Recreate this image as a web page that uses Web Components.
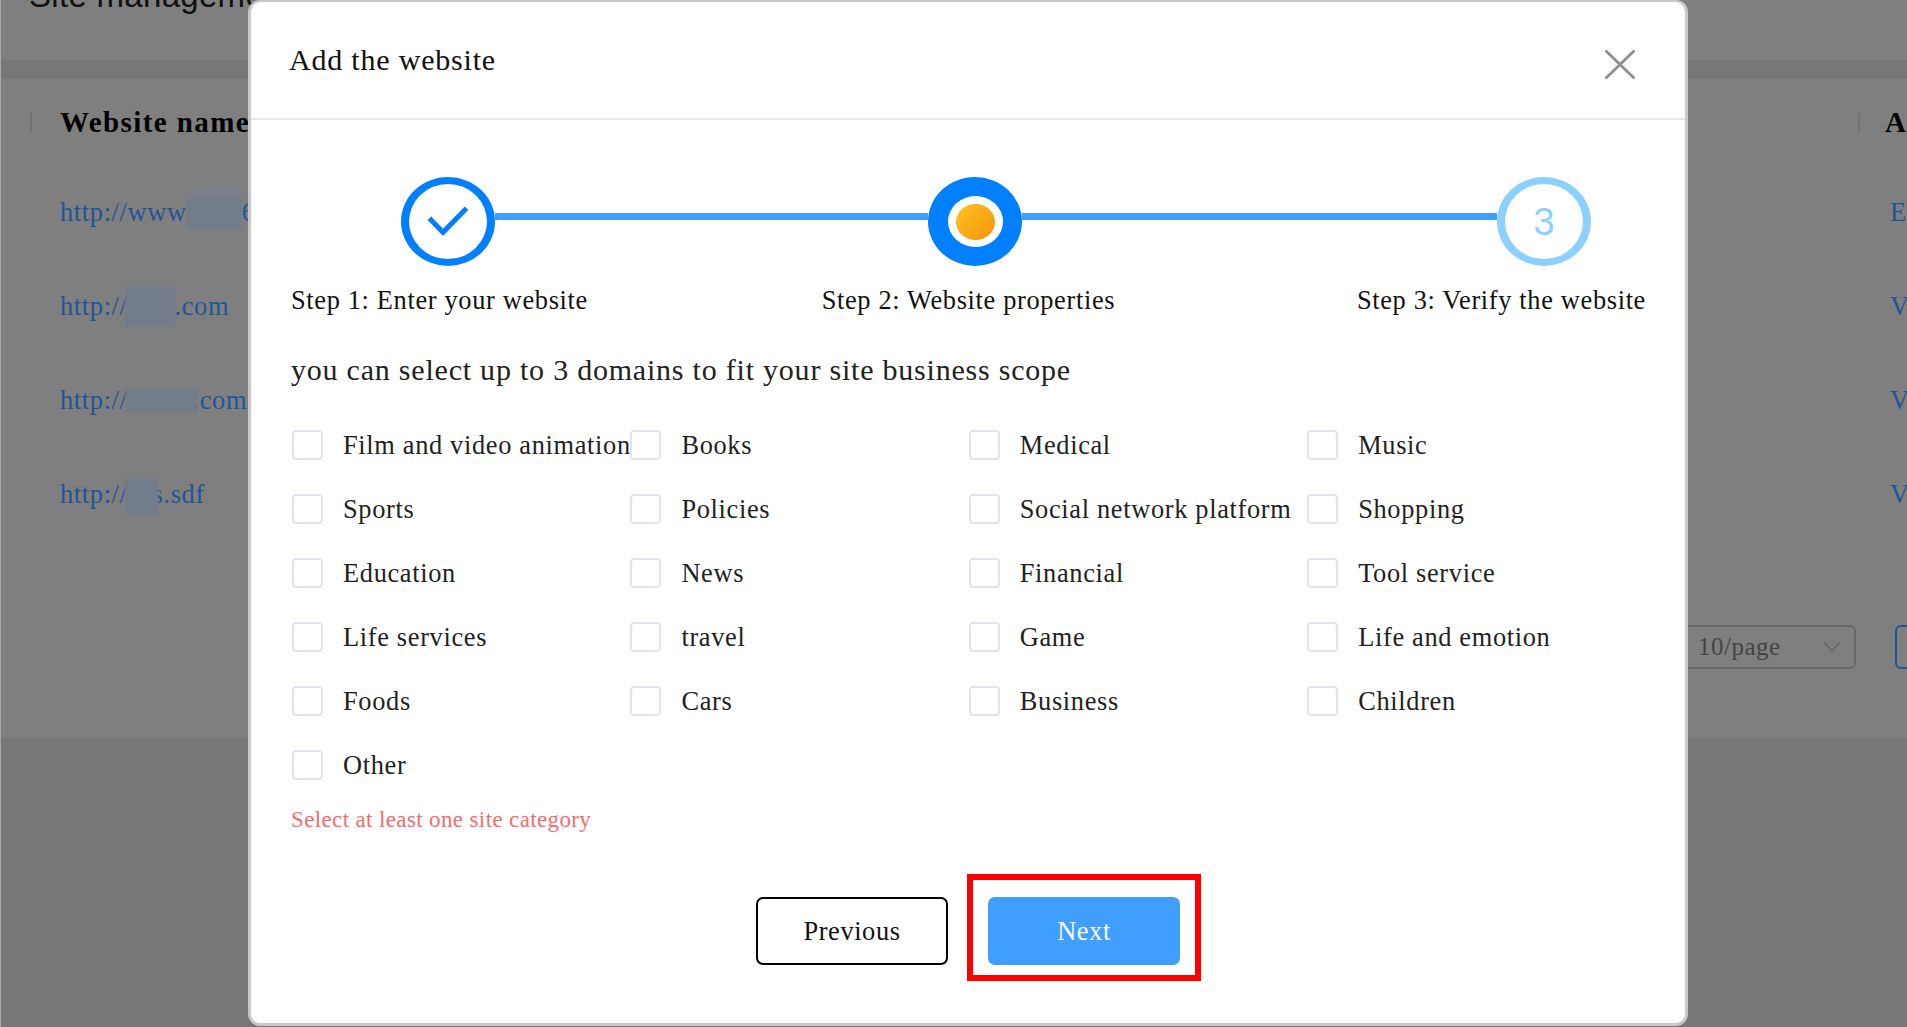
<!DOCTYPE html>
<html lang="en">
<head>
<meta charset="utf-8">
<title>Add the website</title>
<style>
  html, body { margin: 0; height: 100%; overflow: hidden; }
  body { font-family: "Liberation Serif", serif; color: #000; }
</style>
</head>
<body>
<site-page></site-page>
<add-website-dialog></add-website-dialog>

<script>
//Fondo de la página: lo que queda detrás del velo
class SitePage extends HTMLElement {
    constructor() {
        super();
        this.dom = this.attachShadow({mode:'open'});
    }
    connectedCallback() {
        //texto, ancho del tapón, alto, bajada, margen, resto del texto, acción
        const rows = [
            ['http://www', 55, 42, -8, 0, '6', 'E'],
            ['http://', 50, 40, -12, 0, '.com', 'V'],
            ['http://', 72, 24, -4, -4, '.com', 'V'],
            ['http://', 33, 36, -12, -5, 's.sdf', 'V']
        ];
        const htmlRows = rows.map((r, i) => `
            <div class="row">
                <div class="name"><span class="lnk">${r[0]}<i class="hide" style="width:${r[1]}px;height:${r[2]}px;vertical-align:${r[3]}px;margin:0 ${r[4]}px 0 ${i ? -3 : 0}px"></i>${r[5]}</span></div>
                <div class="act lnk">${r[6]}</div>
            </div>`).join('');
        this.dom.innerHTML = `
        <style>
            :host { display:block; position:relative; width:1907px; height:1027px; background:#eceef1; overflow:hidden; font-family:"Liberation Serif",serif; }
            .top { height:60px; background:#fff; overflow:hidden; }
            .top h1 { margin:-20px 0 0 29px; font:400 33px/32px "Liberation Sans",sans-serif; letter-spacing:.3px; color:#222; white-space:nowrap; }
            .band { height:19px; }
            .card { background:#fff; height:659px; }
            .row { display:flex; height:94px; line-height:94px; font-size:26.5px; letter-spacing:.6px; }
            .row.head { height:86px; line-height:86px; font-weight:700; font-size:29px; letter-spacing:1.4px; }
            .name { width:1797px; padding-left:60px; flex:none; white-space:nowrap; position:relative; }
            .head .name::before, .head .act::before { content:""; position:absolute; top:34px; height:20px; width:2px; background:#e6e6e6; }
            .head .name::before { left:30px; }
            .act { position:relative; padding-left:28px; white-space:nowrap; }
            .head .act::before { left:1px; }
            .row:not(.head) .act { padding-left:33px; }
            /* los azules quedan por encima del velo: debajo no llegarían a este tono */
            .lnk { position:relative; z-index:1; color:#1f5596; }
            .hide { display:inline-block; background:#727c8a; filter:blur(.8px); }
            .row:nth-child(2) .hide { background:linear-gradient(#7d8086 22%,#727c8a 34%); }
            .pager { display:flex; justify-content:flex-end; margin-top:84px; height:44px; gap:39px; }
            .select { box-sizing:border-box; width:220px; height:44px; border:2.5px solid #d0d0d0; border-radius:6px; display:flex; align-items:center; justify-content:space-between; padding:0 14px 0 60px; font-size:25px; letter-spacing:.5px; color:#888; }
            .select svg { display:block; }
            .pg { box-sizing:border-box; position:relative; z-index:1; width:30px; height:44px; margin-right:-18px; border:2.5px solid #1f5596; border-radius:6px; }
            .veil { position:absolute; inset:0; background:rgba(0,0,0,.5); border-left:1px solid #a8a8a8; }
        </style>
        <div class="top"><h1>Site management</h1></div>
        <div class="band"></div>
        <div class="card">
            <div class="row head"><div class="name">Website name</div><div class="act">A</div></div>
            ${htmlRows}
            <div class="pager">
                <div class="select"><span>10/page</span><svg width="16" height="10" viewBox="0 0 16 10"><path d="M.5.5 8 9 15.5.5" fill="none" stroke="#c4c4c4" stroke-width="1.4"/></svg></div>
                <div class="pg"></div>
            </div>
        </div>
        <div class="veil"></div>`;
    }
}
customElements.define('site-page', SitePage);

//state: done | current | todo
class StepCircle extends HTMLElement {
    constructor() {
        super();
        this.dom = this.attachShadow({mode:'open'});
    }
    connectedCallback() {
        const state = this.getAttribute('state');
        let inner = '';
        if (state === 'done') inner = `<svg width="78" height="75" viewBox="0 0 78 75"><path d="M20.4 34.3 34 48.3 57.5 24.3" fill="none" stroke="#0080ff" stroke-width="5"/></svg>`;
        if (state === 'current') inner = `<div class="hole"><div class="dot"></div></div>`;
        if (state === 'todo') inner = `<span>${this.getAttribute('num')}</span>`;
        this.dom.innerHTML = `
        <style>
            :host { display:block; flex:none; width:94px; height:89px; }
            .c { box-sizing:border-box; width:100%; height:100%; border-radius:50%; border:solid #0080ff; border-width:7px 8px; display:flex; align-items:center; justify-content:center; background:#fff; }
            .c.current { background:#0080ff; }
            .c.todo { border-color:#8cd0ff; color:#8cd0ff; font:400 38px/1 "Liberation Sans",sans-serif; }
            svg { display:block; }
            .hole { width:55px; height:51px; border-radius:50%; background:#fff; display:flex; align-items:center; justify-content:center; }
            .dot { width:39px; height:36px; border-radius:50%; background:linear-gradient(135deg,#fdc222,#f4950a); }
        </style>
        <div class="c ${state}">${inner}</div>`;
    }
}
customElements.define('step-circle', StepCircle);

class DomainCheck extends HTMLElement {
    constructor() {
        super();
        this.dom = this.attachShadow({mode:'open'});
    }
    connectedCallback() {
        this.dom.innerHTML = `
        <style>
            :host { display:flex; align-items:flex-start; gap:20px; height:30px; white-space:nowrap; font-size:26.4px; letter-spacing:.66px; line-height:30px; color:#222; }
            .box { box-sizing:border-box; flex:none; width:31px; height:30px; margin-left:1px; border:2px solid #e1e4ee; border-radius:4px; background:#fff; }
        </style>
        <div class="box"></div><slot></slot>`;
    }
}
customElements.define('domain-check', DomainCheck);

class DialogButton extends HTMLElement {
    constructor() {
        super();
        this.dom = this.attachShadow({mode:'open'});
    }
    connectedCallback() {
        this.dom.innerHTML = `
        <style>
            :host { display:flex; box-sizing:border-box; width:192px; height:68px; align-items:center; justify-content:center; border-radius:7px; font-size:26.4px; letter-spacing:.6px; border:2.5px solid #000; color:#111; background:#fff; }
            :host([primary]) { border-color:#409eff; background:#409eff; color:#fff; }
        </style>
        <slot></slot>`;
    }
}
customElements.define('dialog-button', DialogButton);

const domains = [
    'Film and video animation','Books','Medical','Music',
    'Sports','Policies','Social network platform','Shopping',
    'Education','News','Financial','Tool service',
    'Life services','travel','Game','Life and emotion',
    'Foods','Cars','Business','Children',
    'Other'
];

class AddWebsiteDialog extends HTMLElement {
    constructor() {
        super();
        this.dom = this.attachShadow({mode:'open'});
    }
    createStyle() {
        return `
        <style>
            :host { position:absolute; z-index:2; left:248px; top:0; width:1440px; height:1026px; box-sizing:border-box; border:solid #c8c8c8; border-width:2px 3px 3px 3px; border-radius:12px; background:#fff; display:flex; flex-direction:column; font-family:"Liberation Serif",serif; color:#111; }
            header { flex:none; height:116px; border-bottom:2px solid #e8e8e8; display:flex; justify-content:space-between; padding:0 49px 0 38px; }
            h2 { margin:40px 0 0; font-size:30px; letter-spacing:.8px; line-height:36px; font-weight:400; }
            header svg { display:block; margin-top:47px; }
            main { flex:1; padding:57px 39px 0 40px; position:relative; }
            .track { display:flex; padding:0 55px 0 110px; }
            .line { flex:1; height:7px; margin-top:36px; background:#409eff; }
            .line.first { flex:none; width:433px; }
            .labels { display:flex; justify-content:space-between; margin-top:19px; font-size:26.4px; letter-spacing:.65px; line-height:30px; white-space:nowrap; color:#111; }
            .labels span:nth-child(2) { margin-left:-8px; }
            .hint { margin:37px 0 0; font-size:30px; letter-spacing:.78px; line-height:36px; font-weight:400; white-space:nowrap; color:#222; }
            .grid { display:grid; grid-template-columns:repeat(4,338.4px); row-gap:34px; margin-top:42px; }
            .err { margin-top:27px; font-size:23px; letter-spacing:.37px; line-height:26px; color:#f56c6c; }
            .btns { display:flex; justify-content:flex-start; gap:40px; margin:64px 0 0 465px; }
            .mark { position:absolute; left:716px; top:754px; width:234px; height:107px; box-sizing:border-box; border:solid #f00; border-width:6px; }
        </style>`;
    }
    createTemplate() {
        const checks = domains.map(d => `<domain-check>${d}</domain-check>`).join('');
        return `
        <header>
            <h2>Add the website</h2>
            <svg width="32" height="31" viewBox="0 0 32 31"><path d="M1.5 1.5 30.5 29.5M30.5 1.5 1.5 29.5" fill="none" stroke="#8e8e93" stroke-width="2.8"/></svg>
        </header>
        <main>
            <div class="track">
                <step-circle state="done"></step-circle>
                <div class="line first"></div>
                <step-circle state="current"></step-circle>
                <div class="line"></div>
                <step-circle state="todo" num="3"></step-circle>
            </div>
            <div class="labels">
                <span>Step 1: Enter your website</span>
                <span>Step 2: Website properties</span>
                <span>Step 3: Verify the website</span>
            </div>
            <p class="hint">you can select up to 3 domains to fit your site business scope</p>
            <div class="grid">${checks}</div>
            <div class="err">Select at least one site category</div>
            <div class="btns">
                <dialog-button>Previous</dialog-button>
                <dialog-button primary>Next</dialog-button>
            </div>
            <div class="mark"></div>
        </main>`;
    }
    connectedCallback() {
        this.dom.innerHTML = this.createStyle() + this.createTemplate();
    }
}
customElements.define('add-website-dialog', AddWebsiteDialog);
</script>
</body>
</html>
